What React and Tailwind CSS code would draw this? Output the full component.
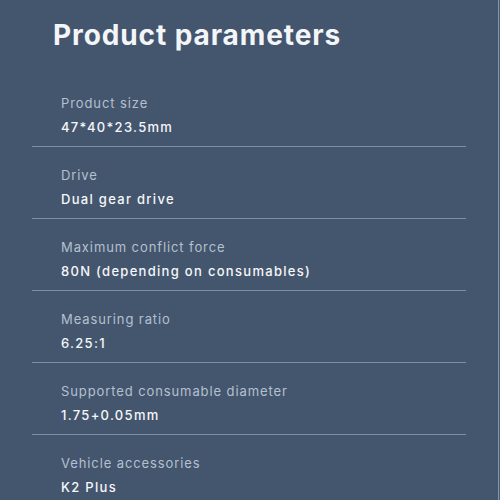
export default function App() {
  const rows = [
    ["Product size", "47*40*23.5mm"],
    ["Drive", "Dual gear drive"],
    ["Maximum conflict force", "80N (depending on consumables)"],
    ["Measuring ratio", "6.25:1"],
    ["Supported consumable diameter", "1.75+0.05mm"],
    ["Vehicle accessories", "K2 Plus"],
  ];
  return (
    <div
      className="w-[500px] h-[500px] overflow-hidden bg-[#44566e] flex"
      style={{ fontFamily: "Inter, 'Noto Sans', sans-serif" }}
    >
      <div className="flex-1 flex flex-col">
        <h1 className="pl-[53px] pt-[17px] text-[28px] leading-[36px] font-bold text-[#f3f5f8] tracking-[0.9px]">
          Product parameters
        </h1>
        <div className="mt-[24px] ml-[32px] w-[434px] flex flex-col">
          {rows.map(([label, value], i) => (
            <div
              key={i}
              className={
                "pl-[29px] pb-[9px] border-b border-[#7d8fa8] " +
                (i === 0 ? "pt-[16px]" : "pt-[18px]")
              }
            >
              <div className="text-[13px] leading-[20px] text-[#b4c0ce] tracking-[0.9px]">
                {label}
              </div>
              <div className="mt-[4px] text-[13px] leading-[20px] font-medium text-[#f5f7f9] tracking-[1.3px]">
                {value}
              </div>
            </div>
          ))}
        </div>
      </div>
      <div className="w-[2px] h-full flex">
        <div className="w-[1px] bg-[#8494ab]" />
        <div className="w-[1px] bg-[#4a5c74]" />
      </div>
    </div>
  );
}
